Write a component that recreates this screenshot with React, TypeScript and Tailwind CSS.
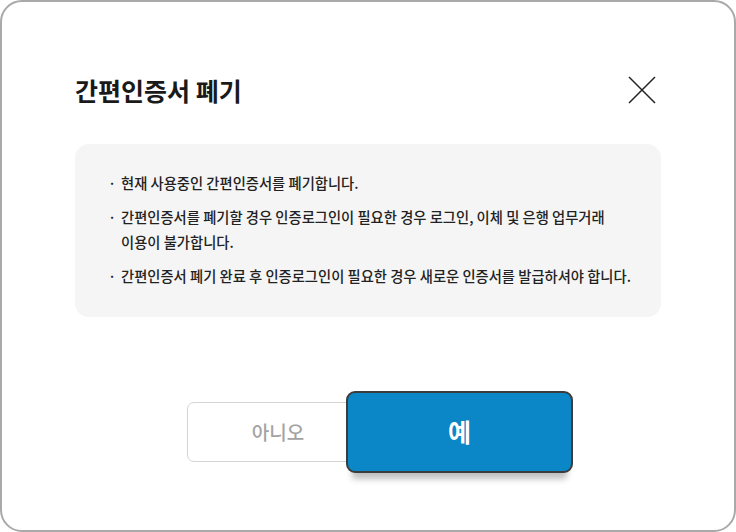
import React from "react";

const font = { fontFamily: '"Noto Sans CJK KR", "Noto Sans", sans-serif' };

export default function App() {
  const items: React.ReactNode[] = [
    "현재 사용중인 간편인증서를 폐기합니다.",
    <>
      간편인증서를 폐기할 경우 인증로그인이 필요한 경우 로그인, 이체 및 은행 업무거래
      <br />
      이용이 불가합니다.
    </>,
    "간편인증서 폐기 완료 후 인증로그인이 필요한 경우 새로운 인증서를 발급하셔야 합니다.",
  ];
  return (
    <div style={font} className="w-[736px] h-[532px] bg-white">
      <div className="w-[736px] h-[532px] rounded-[22px] border-2 border-[#a9a9a9] bg-white flex flex-col">
        <div className="flex items-center justify-between pl-[73px] pr-[78px] pt-[66px] h-[140px] pb-[30px]">
          <h1 className="text-[25px] font-bold text-[#1a1a1a] leading-none">
            간편인증서 폐기
          </h1>
          <svg width="28" height="28" viewBox="0 0 28 28" className="text-[#222]">
            <path d="M1 1 L27 27 M27 1 L1 27" stroke="currentColor" strokeWidth="1.5" fill="none" />
          </svg>
        </div>
        <div className="mx-[73px] rounded-[14px] bg-[#f5f5f5] pl-[33px] pr-[16px] pt-[26px] pb-[26px] h-[173px] mt-[2px]">
          <ul className="flex flex-col gap-[9px]">
            {items.map((t, i) => (
              <li key={i} className="flex text-[14.3px] leading-[25px] font-medium text-[#222]">
                <span className="w-[13px] shrink-0">·</span>
                <span className="whitespace-nowrap">{t}</span>
              </li>
            ))}
          </ul>
        </div>
        <div className="flex items-center pl-[185px] mt-[74px]">
          <button className="w-[182px] h-[60px] rounded-[7px] border border-[#d4d4d4] bg-white text-[19px] text-[#a3a3a3] font-medium">
            아니오
          </button>
          <button className="relative z-10 ml-[-23px] w-[227px] h-[82px] rounded-[9px] border-2 border-[#3c3c3c] bg-[#0b86c6] text-white text-[25px] font-bold shadow-[0_12px_6px_-6px_rgba(0,0,0,0.25)]">
            예
          </button>
        </div>
      </div>
    </div>
  );
}
